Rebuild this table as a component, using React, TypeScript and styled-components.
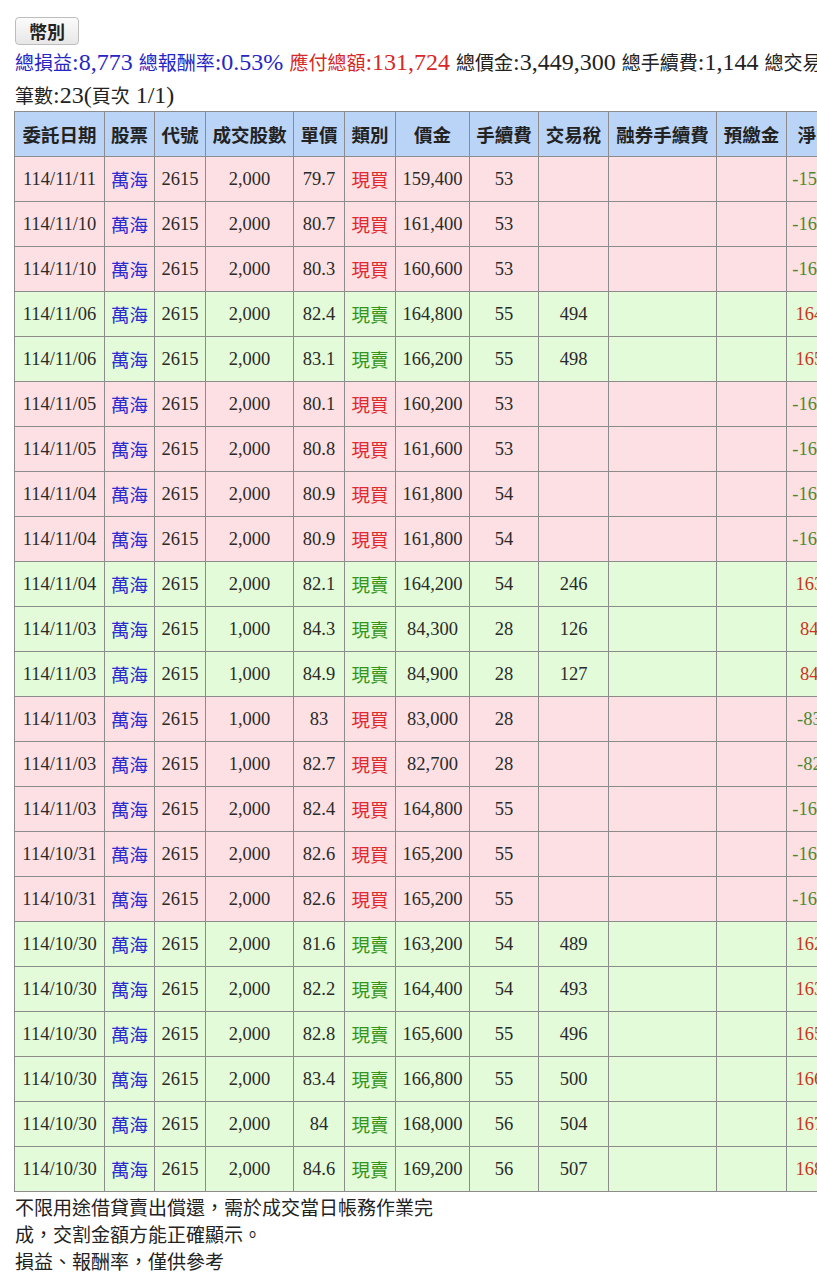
import React, { FC } from "react";
import styled, { createGlobalStyle } from "styled-components";

type Side = "buy" | "sell";

interface Trade {
  date: string;
  qty: number;
  price: string;
  side: Side;
  amount: number;
  fee: number;
  tax?: number;
}

const trades: Trade[] = [
  { date: "114/11/11", qty: 2000, price: "79.7", side: "buy", amount: 159400, fee: 53 },
  { date: "114/11/10", qty: 2000, price: "80.7", side: "buy", amount: 161400, fee: 53 },
  { date: "114/11/10", qty: 2000, price: "80.3", side: "buy", amount: 160600, fee: 53 },
  { date: "114/11/06", qty: 2000, price: "82.4", side: "sell", amount: 164800, fee: 55, tax: 494 },
  { date: "114/11/06", qty: 2000, price: "83.1", side: "sell", amount: 166200, fee: 55, tax: 498 },
  { date: "114/11/05", qty: 2000, price: "80.1", side: "buy", amount: 160200, fee: 53 },
  { date: "114/11/05", qty: 2000, price: "80.8", side: "buy", amount: 161600, fee: 53 },
  { date: "114/11/04", qty: 2000, price: "80.9", side: "buy", amount: 161800, fee: 54 },
  { date: "114/11/04", qty: 2000, price: "80.9", side: "buy", amount: 161800, fee: 54 },
  { date: "114/11/04", qty: 2000, price: "82.1", side: "sell", amount: 164200, fee: 54, tax: 246 },
  { date: "114/11/03", qty: 1000, price: "84.3", side: "sell", amount: 84300, fee: 28, tax: 126 },
  { date: "114/11/03", qty: 1000, price: "84.9", side: "sell", amount: 84900, fee: 28, tax: 127 },
  { date: "114/11/03", qty: 1000, price: "83", side: "buy", amount: 83000, fee: 28 },
  { date: "114/11/03", qty: 1000, price: "82.7", side: "buy", amount: 82700, fee: 28 },
  { date: "114/11/03", qty: 2000, price: "82.4", side: "buy", amount: 164800, fee: 55 },
  { date: "114/10/31", qty: 2000, price: "82.6", side: "buy", amount: 165200, fee: 55 },
  { date: "114/10/31", qty: 2000, price: "82.6", side: "buy", amount: 165200, fee: 55 },
  { date: "114/10/30", qty: 2000, price: "81.6", side: "sell", amount: 163200, fee: 54, tax: 489 },
  { date: "114/10/30", qty: 2000, price: "82.2", side: "sell", amount: 164400, fee: 54, tax: 493 },
  { date: "114/10/30", qty: 2000, price: "82.8", side: "sell", amount: 165600, fee: 55, tax: 496 },
  { date: "114/10/30", qty: 2000, price: "83.4", side: "sell", amount: 166800, fee: 55, tax: 500 },
  { date: "114/10/30", qty: 2000, price: "84", side: "sell", amount: 168000, fee: 56, tax: 504 },
  { date: "114/10/30", qty: 2000, price: "84.6", side: "sell", amount: 169200, fee: 56, tax: 507 },
];

const columns = [
  { title: "委託日期", width: 90 },
  { title: "股票", width: 50 },
  { title: "代號", width: 51 },
  { title: "成交股數", width: 88 },
  { title: "單價", width: 51 },
  { title: "類別", width: 51 },
  { title: "價金", width: 74 },
  { title: "手續費", width: 69 },
  { title: "交易稅", width: 70 },
  { title: "融券手續費", width: 108 },
  { title: "預繳金", width: 70 },
  { title: "淨收付", width: 78 },
];

const fmt = (n: number) => n.toLocaleString("en-US");

// 買進 = 付出價金+手續費, 賣出 = 收入價金-手續費-交易稅
const netOf = (t: Trade) =>
  t.side === "buy" ? -(t.amount + t.fee) : t.amount - t.fee - (t.tax ?? 0);

const App: FC = () => {
  return (
    <>
      <GlobalStyle />
      <Page>
        <CurrencyButton type="button">幣別</CurrencyButton>
        <Summary>
          <Item $tone="blue">
            <Label>總損益</Label>:8,773{" "}
          </Item>
          <Item $tone="blue">
            <Label>總報酬率</Label>:0.53%{" "}
          </Item>
          <Item $tone="red">
            <Label>應付總額</Label>:131,724{" "}
          </Item>
          <Item>
            <Label>總價金</Label>:3,449,300{" "}
          </Item>
          <Item>
            <Label>總手續費</Label>:1,144{" "}
          </Item>
          <Item>
            <Label>總交易稅</Label>:4,480
          </Item>
        </Summary>
        <Summary $last>
          <Label>筆數</Label>:23(<Label>頁次</Label> 1/1)
        </Summary>
        <Table>
          <colgroup>
            {columns.map((c) => (
              <col key={c.title} style={{ width: c.width }} />
            ))}
          </colgroup>
          <thead>
            <tr>
              {columns.map((c) => (
                <Th key={c.title}>{c.title}</Th>
              ))}
            </tr>
          </thead>
          <tbody>
            {trades.map((t, i) => {
              const net = netOf(t);
              return (
                <Row key={i} $side={t.side}>
                  <Td>{t.date}</Td>
                  <Td>
                    <Stock>萬海</Stock>
                  </Td>
                  <Td>2615</Td>
                  <Td>{fmt(t.qty)}</Td>
                  <Td>{t.price}</Td>
                  <Td>
                    <Kind $side={t.side}>{t.side === "buy" ? "現買" : "現賣"}</Kind>
                  </Td>
                  <Td>{fmt(t.amount)}</Td>
                  <Td>{t.fee}</Td>
                  <Td>{t.tax ?? ""}</Td>
                  <Td />
                  <Td />
                  <Td>
                    <Net $positive={net > 0}>{fmt(net)}</Net>
                  </Td>
                </Row>
              );
            })}
          </tbody>
        </Table>
        <Note>
          不限用途借貸賣出償還，需於成交當日帳務作業完成，交割金額方能正確顯示。
          <br />
          損益、報酬率，僅供參考
        </Note>
      </Page>
    </>
  );
};

export default App;

const cjk = `"Noto Sans CJK TC", "Noto Sans", sans-serif`;

const GlobalStyle = createGlobalStyle`
  html, body {
    margin: 0;
    padding: 0;
    background: #fff;
    overflow-x: hidden;
  }
  body {
    font-family: "Liberation Serif", "Noto Sans CJK TC", serif;
    color: #222;
  }
`;

const Page = styled.div`
  padding: 17px 0 0 14px;
  width: max-content;
`;

const CurrencyButton = styled.button`
  display: block;
  height: 28px;
  padding: 0 13px;
  margin: 0 0 0 1px;
  font-family: ${cjk};
  font-size: 18px;
  font-weight: 700;
  color: #222;
  background: linear-gradient(#fbfbfb, #e7e7e7);
  border: 1px solid #bdbdbd;
  border-radius: 4px;
  line-height: 1;
`;

const Summary = styled.div<{ $last?: boolean }>`
  font-size: 24px;
  line-height: ${({ $last }) => ($last ? "31px" : "33px")};
  white-space: nowrap;
  padding-left: 1px;
`;

const Label = styled.span`
  font-family: ${cjk};
  font-size: 19px;
`;

const toneColor = { blue: "#2626c4", red: "#d62828", plain: "#222" };

const Item = styled.span<{ $tone?: "blue" | "red" }>`
  color: ${({ $tone }) => toneColor[$tone ?? "plain"]};
`;

const Table = styled.table`
  border-collapse: collapse;
  table-layout: fixed;
  width: 850px;
  border: 1px solid #8c8c8c;
  font-size: 18.5px;
`;

const Th = styled.th`
  height: 44px;
  padding: 0;
  background: #b9d4f7;
  border: 1px solid #8c8c8c;
  font-family: ${cjk};
  font-size: 18.5px;
  font-weight: 700;
  color: #222;
  white-space: nowrap;
  overflow: hidden;
`;

const Row = styled.tr<{ $side: Side }>`
  background: ${({ $side }) => ($side === "buy" ? "#fde0e3" : "#e3fbd8")};
`;

const Td = styled.td`
  height: 44px;
  padding: 0;
  text-align: center;
  border: 1px solid #8c8c8c;
  white-space: nowrap;
  overflow: hidden;
  color: #2a2a2a;
`;

const Stock = styled.span`
  font-family: ${cjk};
  color: #2a2ad2;
`;

const Kind = styled.span<{ $side: Side }>`
  font-family: ${cjk};
  color: ${({ $side }) => ($side === "buy" ? "#e0282e" : "#35951a")};
`;

const Net = styled.span<{ $positive: boolean }>`
  color: ${({ $positive }) => ($positive ? "#cc3322" : "#4a8a2c")};
`;

const Note = styled.p`
  width: 430px;
  margin: 1px 0 0 1px;
  font-family: ${cjk};
  font-size: 19px;
  line-height: 27px;
  color: #222;
`;
